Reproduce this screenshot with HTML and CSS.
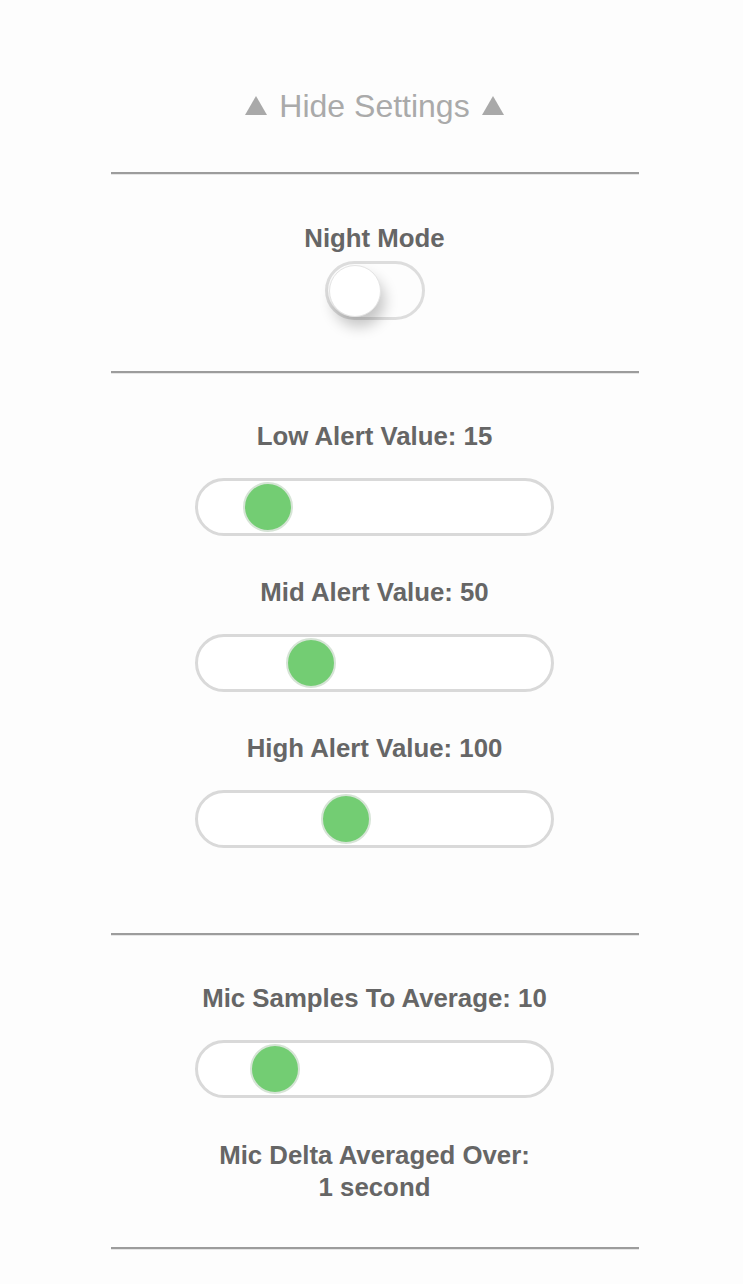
FILE: index.html
```html
<!DOCTYPE html>
<html>
<head>
<meta charset="utf-8">
<link rel="stylesheet" href="styles.css">
</head>
<body>
<div class="page">
  <div class="title">
    <svg class="tri" width="22" height="19" viewBox="0 0 22 19"><polygon points="11,0 22,19 0,19" fill="#a9a9a9"/></svg>
    <span>Hide Settings</span>
    <svg class="tri" width="22" height="19" viewBox="0 0 22 19"><polygon points="11,0 22,19 0,19" fill="#a9a9a9"/></svg>
  </div>
  <hr class="rule rule-first">

  <div class="label label-night">Night Mode</div>
  <div class="toggle"><div class="knob"></div></div>
  <hr class="rule rule-after-toggle">

  <div class="label label-first">Low Alert Value: 15</div>
  <div class="track"><div class="thumb" style="left:45px"></div></div>
  <div class="label label-next">Mid Alert Value: 50</div>
  <div class="track"><div class="thumb" style="left:88px"></div></div>
  <div class="label label-next">High Alert Value: 100</div>
  <div class="track"><div class="thumb" style="left:123px"></div></div>
  <hr class="rule rule-after-sliders">

  <div class="label label-first">Mic Samples To Average: 10</div>
  <div class="track"><div class="thumb" style="left:52px"></div></div>
  <div class="label label-next label-multi">Mic Delta Averaged Over:<br>1 second</div>
  <hr class="rule rule-last">
</div>
</body>
</html>
```

FILE: styles.css
```css
html, body {
  margin: 0;
  padding: 0;
  background: #fdfdfd;
}
body {
  font-family: "Liberation Sans", Arial, Helvetica, sans-serif;
}
.page {
  width: 528px;
  margin: 0 auto;
  padding-left: 6px;
  display: flex;
  flex-direction: column;
  align-items: center;
  padding-bottom: 30px;
}
.title {
  margin-top: 86px;
  height: 40px;
  display: flex;
  align-items: center;
  justify-content: center;
  gap: 12px;
  color: #aaaaaa;
  font-size: 32px;
  line-height: 40px;
}
.title .tri {
  display: block;
  margin-top: -1px;
}
.rule {
  width: 528px;
  margin: 0;
  border: none;
  border-top: 2px solid #9c9c9c;
  border-bottom: 1px solid #e6e6e6;
  height: 0;
}
.rule-first { margin-top: 46px; }
.rule-after-toggle { margin-top: 51px; }
.rule-after-sliders { margin-top: 85px; }
.rule-last { margin-top: 44px; }

.label {
  color: #666666;
  font-weight: bold;
  font-size: 25.8px;
  line-height: 30px;
  text-align: center;
  white-space: nowrap;
}
.label-night { margin-top: 48px; }
.label-first { margin-top: 47px; }
.label-next { margin-top: 41px; }
.label-multi { line-height: 32px; }

.toggle {
  margin-top: 8px;
  width: 94px;
  height: 53px;
  border: 3px solid #dddddd;
  border-radius: 30px;
  background: #fdfdfd;
  position: relative;
}
.knob {
  position: absolute;
  left: 1px;
  top: 1px;
  width: 52px;
  height: 52px;
  border-radius: 50%;
  background: #ffffff;
  border: 1px solid #e4e4e4;
  box-sizing: border-box;
  box-shadow: 4px 10px 14px rgba(0, 0, 0, 0.22);
}

.track {
  margin-top: 27px;
  width: 353px;
  height: 52px;
  border: 3px solid #d9d9d9;
  border-radius: 30px;
  background: #ffffff;
  position: relative;
}
.thumb {
  position: absolute;
  top: 50%;
  width: 50px;
  height: 50px;
  margin-top: -25px;
  box-sizing: border-box;
  border-radius: 50%;
  background: #73cd73;
  border: 2px solid #d6e4d6;
}
```
